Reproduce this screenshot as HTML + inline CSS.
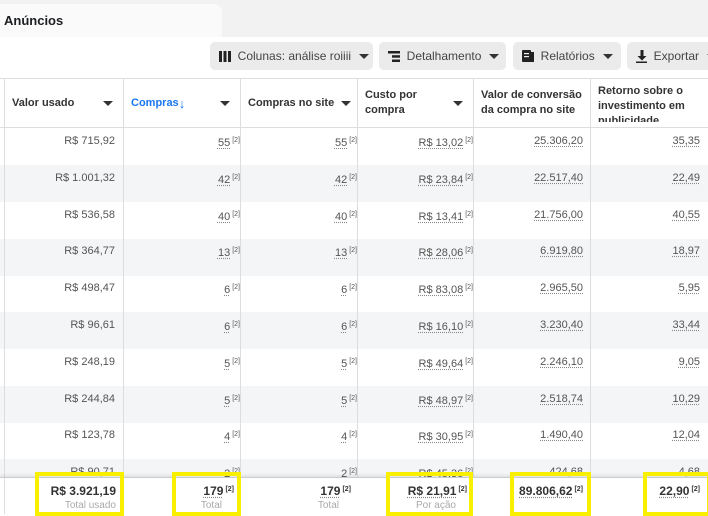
<!DOCTYPE html>
<html><head><meta charset="utf-8"><style>
*{box-sizing:border-box;margin:0;padding:0}
body{width:708px;height:514px;overflow:hidden;background:#fff;font-family:"Liberation Sans",sans-serif;color:#1c1e21;position:relative}
.a{position:absolute}
.top{left:0;top:0;width:708px;height:37px;background:#f2f2f2}
.tab{left:0;top:4px;width:222px;height:33px;background:#fafafa;border-radius:0 8px 0 0;font-size:13px;font-weight:bold;padding:9px 4px;color:#1c1e21}
.btn{top:42px;height:28px;background:#ebebeb;border-radius:5px;font-size:12px;color:#444;display:flex;align-items:center;padding-left:9px;white-space:nowrap}
.caret{display:inline-block;width:0;height:0;border-left:5px solid transparent;border-right:5px solid transparent;border-top:5px solid #333;margin-left:8px}
.hdr{top:78px;left:0;width:708px;height:50px;border-top:1px solid #ddd;border-bottom:1px solid #ddd;background:#fff}
.hc{top:79px;height:48px;font-size:11px;font-weight:bold;color:#333;line-height:15px;display:flex;align-items:center;padding-left:8px}
.hc .caret{position:absolute;right:10px;top:22px;margin:0;border-top-color:#333}
.vl{top:78px;width:1px;height:400px;background:#ddd}
.row{left:0;width:708px;height:37px}
.c{font-size:11px;color:#555;text-align:right;top:0;line-height:26px}
.u{text-decoration:underline dotted #888;text-underline-offset:2px}
sup{font-size:7px;margin-left:2px;vertical-align:4px}
.foot{top:477px;left:0;width:708px;height:37px;background:#fff;border-top:1px solid #ccc;box-shadow:0 -2px 3px rgba(0,0,0,.08)}
.fv{font-size:12px;font-weight:bold;color:#333;text-align:right;top:484px}
.fl{font-size:10px;color:#aaa;text-align:right;top:500px}
.y{border:4px solid #f8f000}
</style></head><body>
<div class="a top"></div>
<div class="a tab">Anúncios</div>
<div class="a btn" style="left:210px;width:163px"><svg width="12" height="11"><rect x="0" y="0" width="3" height="11" fill="#222"/><rect x="4.5" y="0" width="3" height="11" fill="#222"/><rect x="9" y="0" width="3" height="11" fill="#222"/></svg>&nbsp; Colunas: análise roiiii<span class="caret"></span></div>
<div class="a btn" style="left:379px;width:127px"><svg width="12" height="11"><rect x="0" y="0" width="12" height="2.5" fill="#222"/><rect x="4" y="4.2" width="8" height="2.5" fill="#222"/><rect x="4" y="8.5" width="8" height="2.5" fill="#222"/></svg>&nbsp; Detalhamento<span class="caret"></span></div>
<div class="a btn" style="left:513px;width:108px"><svg width="12" height="12"><rect x="0" y="0" width="9" height="12" rx="1" fill="#222"/><rect x="3" y="2" width="9" height="10" fill="#222"/><rect x="2" y="3" width="5" height="1.2" fill="#eee"/><rect x="2" y="6" width="5" height="1.2" fill="#eee"/></svg>&nbsp; Relatórios<span class="caret"></span></div>
<div class="a btn" style="left:627px;width:90px"><svg width="12" height="13"><path d="M4.5 0h3v6h3l-4.5 4.5L1.5 6h3z" fill="#222"/><rect x="0" y="11.5" width="12" height="1.5" fill="#222"/></svg>&nbsp; Exportar<span class="caret"></span></div>
<div class="a hdr"></div>
<div class="a row" style="top:128px"></div>
<div class="a row" style="top:165px;background:#f4f5f6"></div>
<div class="a row" style="top:239px;background:#f4f5f6"></div>
<div class="a row" style="top:312px;background:#f4f5f6"></div>
<div class="a row" style="top:386px;background:#f4f5f6"></div>
<div class="a row" style="top:459px;background:#f4f5f6"></div>
<div class="a vl" style="left:4px"></div><div class="a vl" style="left:123px"></div><div class="a vl" style="left:240px"></div><div class="a vl" style="left:357px"></div><div class="a vl" style="left:473px"></div><div class="a vl" style="left:590px"></div>
<div class="a hc" style="left:4px;width:119px">Valor usado<span class="caret"></span></div>
<div class="a hc" style="left:123px;width:117px;color:#1877f2">Compras<span style="font-size:13px;font-weight:normal">&#8595;</span><span class="caret"></span></div>
<div class="a hc" style="left:240px;width:117px">Compras no site<span class="caret" style="right:6px"></span></div>
<div class="a hc" style="left:357px;width:116px">Custo por<br>compra<span class="caret"></span></div>
<div class="a hc" style="left:473px;width:117px">Valor de conversão<br>da compra no site</div>
<div class="a hc" style="left:590px;width:118px;height:43px;align-items:flex-start;padding-top:5px;overflow:hidden">Retorno sobre o<br>investimento em<br>publicidade</div>
<div id="d"></div>
<script>
var data=[["R$ 715,92","55","55","R$ 13,02","25.306,20","35,35"],["R$ 1.001,32","42","42","R$ 23,84","22.517,40","22,49"],["R$ 536,58","40","40","R$ 13,41","21.756,00","40,55"],["R$ 364,77","13","13","R$ 28,06","6.919,80","18,97"],["R$ 498,47","6","6","R$ 83,08","2.965,50","5,95"],["R$ 96,61","6","6","R$ 16,10","3.230,40","33,44"],["R$ 248,19","5","5","R$ 49,64","2.246,10","9,05"],["R$ 244,84","5","5","R$ 48,97","2.518,74","10,29"],["R$ 123,78","4","4","R$ 30,95","1.490,40","12,04"],["R$ 90,71","2","2","R$ 45,36","424,68","4,68"]];
var rights=[115,234,351,467,583,700],h="";
data.forEach(function(r,i){var t=128+i*36.8;r.forEach(function(v,j){var s=j==0?v:'<span class="u">'+v+'</span>'+(j<4?'<sup>[2]</sup>':'');h+='<div class="a c" style="top:'+t+'px;right:'+(708-rights[j]-(j>0&&j<4?6:0))+'px">'+s+'</div>';});});
document.getElementById('d').innerHTML=h;
</script>
<div class="a foot"></div>
<div class="a" style="left:4px;top:478px;width:1px;height:36px;background:#ddd"></div>
<div class="a fv" style="right:592px">R$ 3.921,19</div><div class="a fl" style="right:592px">Total usado</div>
<div class="a fv" style="right:474px"><span class="u">179</span><sup>[2]</sup></div><div class="a fl" style="right:486px">Total</div>
<div class="a fv" style="right:357px"><span class="u">179</span><sup>[2]</sup></div><div class="a fl" style="right:369px">Total</div>
<div class="a fv" style="right:241px"><span class="u">R$ 21,91</span><sup>[2]</sup></div><div class="a fl" style="right:252px">Por ação</div>
<div class="a fv" style="right:125px"><span class="u">89.806,62</span><sup>[2]</sup></div>
<div class="a fv" style="right:8px"><span class="u">22,90</span><sup>[2]</sup></div>
<div class="a y" style="left:35px;top:472px;width:89px;height:44px"></div>
<div class="a y" style="left:172px;top:472px;width:69px;height:44px"></div>
<div class="a y" style="left:386px;top:472px;width:87px;height:44px"></div>
<div class="a y" style="left:510px;top:472px;width:81px;height:44px"></div>
<div class="a y" style="left:643px;top:472px;width:68px;height:44px"></div>
</body></html>
